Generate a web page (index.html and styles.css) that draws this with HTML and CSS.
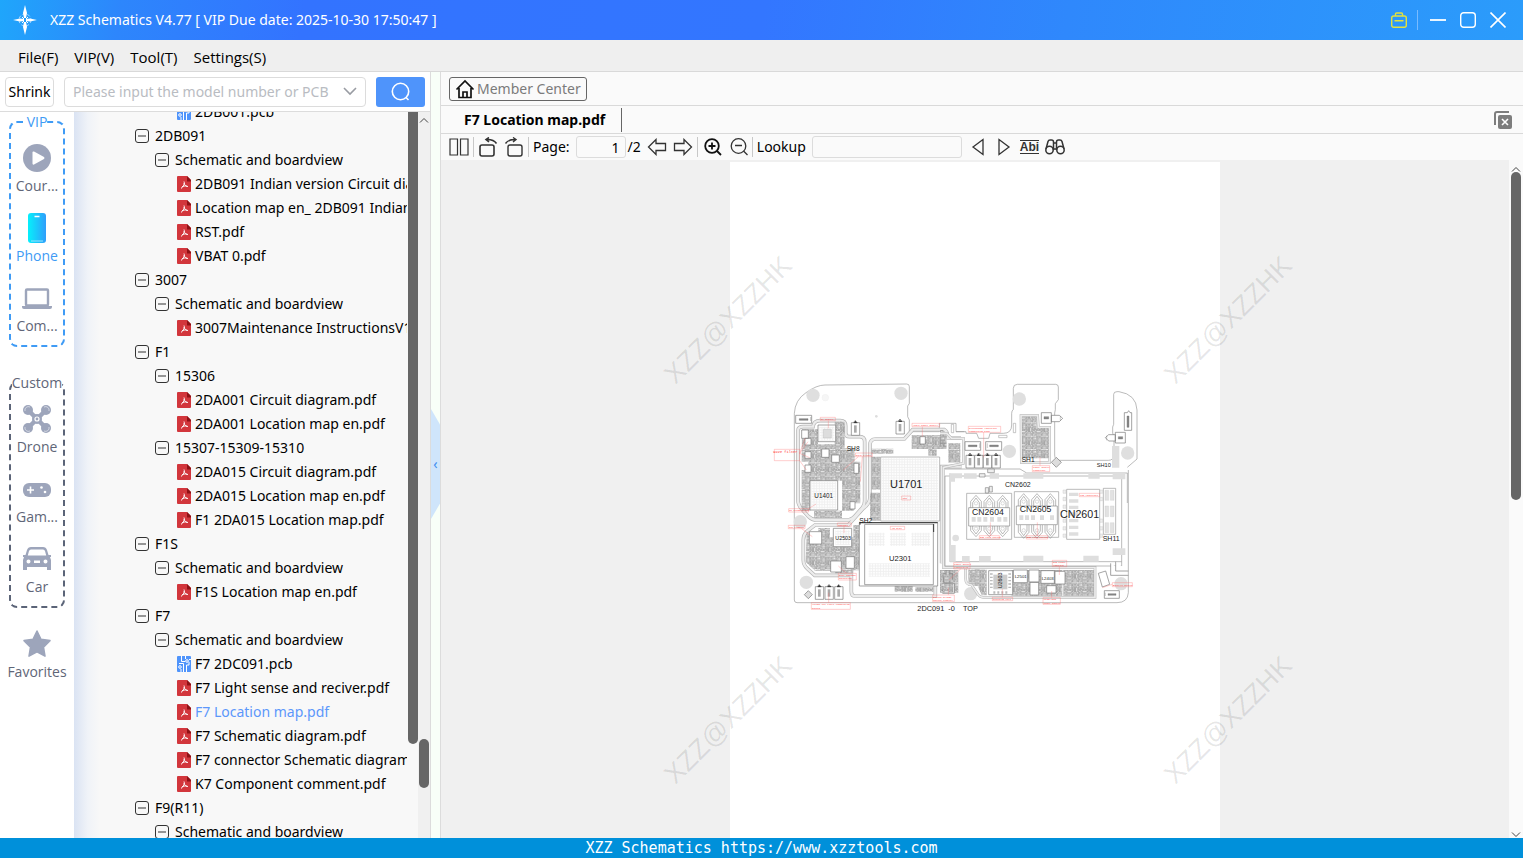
FILE: index.html
```html
<!DOCTYPE html>
<html lang="en">
<head>
    <meta charset="UTF-8">
    <meta name="viewport" content="width=device-width, initial-scale=1.0">
    <title>XZZ Schematics</title>
    <link rel="stylesheet" href="styles.css">
</head>
<body>
    <!-- shared icons -->
    <svg class="defs" width="0" height="0" aria-hidden="true">
        <symbol id="minus" viewBox="0 0 14 14">
            <rect x="0.5" y="0.5" width="13" height="13" rx="2.5" fill="none" stroke="#333"/>
            <path d="M3 7h8" stroke="#333"/>
        </symbol>
        <symbol id="pdf" viewBox="0 0 14 16">
            <path d="M1 0h9l4 4v11a1 1 0 0 1-1 1H1a1 1 0 0 1-1-1V1a1 1 0 0 1 1-1z" fill="#d2363c"/>
            <path d="M10 0l4 4v1.500h-4z" fill="#8e1216"/>
            <path d="M7 5.500c1 2-.5 5-3 7M7 7c.5 2 2 3.500 4 3.500M5 10.800c1.500-.8 3-1 5-.6" fill="none" stroke="#fff" stroke-width="1"/>
        </symbol>
        <symbol id="pcb" viewBox="0 0 14 16">
            <rect width="14" height="16" rx="1" fill="#4f94fb"/>
            <path d="M4.500 0v5.500H8M8.500 0v3M14 3.500h-2M9.500 16V9H12V6M2 7.500h4.500V16M4 16v-3" fill="none" stroke="#fff"/>
            <circle cx="10" cy="5" r="1.300" fill="#4f94fb" stroke="#fff"/>
            <circle cx="3" cy="11" r="1.300" fill="#4f94fb" stroke="#fff"/>
        </symbol>
    </svg>

    <header class="titlebar">
        <svg class="logo" width="24" height="30" viewBox="0 0 24 30">
            <circle cx="12" cy="15" r="6" fill="none" stroke="#a9d6ff" stroke-dasharray="3 2"/>
            <path d="M12 0l2 8-1 5h-2l-1-5zM12 30l2-8-1-5h-2l-1 5zM0 15l7-1.500 4 .5v2l-4 .5zM24 15l-7-1.500-4 .5v2l4 .5z" fill="#fff"/>
            <path d="M9 12l2 2M15 12l-2 2M9 18l2-2M15 18l-2-2" stroke="#fff"/>
        </svg>
        <h1>XZZ Schematics V4.77 [ VIP Due date: 2025-10-30 17:50:47 ]</h1>
        <div class="window-buttons">
            <button aria-label="Toolbox">
                <svg width="16" height="16" viewBox="0 0 16 16" fill="none" stroke="#e3e23c" stroke-width="1.400"><rect x="0.700" y="4" width="14.600" height="11.300" rx="2"/><path d="M4.500 4V2a1 1 0 0 1 1-1h5a1 1 0 0 1 1 1v2M3.500 8.700h9"/></svg>
            </button>
            <span class="line"></span>
            <button aria-label="Minimize">
                <svg width="16" height="16" viewBox="0 0 16 16"><path d="M0 8h16" stroke="#fff" stroke-width="1.800"/></svg>
            </button>
            <button aria-label="Maximize">
                <svg width="16" height="16" viewBox="0 0 16 16"><rect x="0.700" y="0.700" width="14.600" height="14.600" rx="3" fill="none" stroke="#fff" stroke-width="1.400"/></svg>
            </button>
            <button aria-label="Close">
                <svg width="16" height="16" viewBox="0 0 16 16"><path d="M.5.5l15 15M15.500.5l-15 15" stroke="#fff" stroke-width="1.600"/></svg>
            </button>
        </div>
    </header>

    <nav class="menubar">
        <button>File(F)</button>
        <button>VIP(V)</button>
        <button>Tool(T)</button>
        <button>Settings(S)</button>
    </nav>

    <main class="workspace">
        <section class="left">
            <form class="search">
                <button type="button" class="shrink">Shrink</button>
                <div class="combo">
                    <input type="text" aria-label="Model number" placeholder="Please input the model number or PCB">
                    <button type="button" aria-label="History">
                        <svg width="14" height="9" viewBox="0 0 14 9"><path d="M1 1l6 6 6-6" fill="none" stroke="#999ca3" stroke-width="1.600"/></svg>
                    </button>
                </div>
                <button type="button" class="go" aria-label="Search">
                    <svg width="20" height="20" viewBox="0 0 20 20" fill="none" stroke="#fff" stroke-width="1.600"><circle cx="9.500" cy="9.500" r="8.200"/><path d="M15 15.500l2.500 2.500"/></svg>
                </button>
            </form>

            <div class="browser">
                <aside class="sidebar">
                    <fieldset class="group vip">
                        <legend>VIP</legend>
                        <button class="item">
                            <svg width="30" height="30" viewBox="0 0 30 30"><circle cx="15" cy="15" r="14" fill="#9da5bb"/><path d="M10.500 9.500q0-1.500 1.500-1l10 5.500q1 1 0 2l-10 5.500q-1.500.5-1.500-1z" fill="#fff"/></svg>
                            Cour...
                        </button>
                        <button class="item current">
                            <svg width="30" height="30" viewBox="0 0 30 30">
                                <linearGradient id="phone"><stop offset="0" stop-color="#06f0fb"/><stop offset="1" stop-color="#2f9efb"/></linearGradient>
                                <rect x="6" width="18" height="30" rx="3" fill="url(#phone)"/><path d="M12.500 3.500h5" stroke="#fff" stroke-width="1.500"/><path d="M9 28h12" stroke="#9be4ff"/>
                            </svg>
                            Phone
                        </button>
                        <button class="item">
                            <svg width="30" height="30" viewBox="0 0 30 30"><rect x="4" y="6.500" width="22" height="16" rx="1" fill="none" stroke="#9da5bb" stroke-width="2.400"/><path d="M0 23h30v1q0 2-2 2H2q-2 0-2-2z" fill="#9da5bb"/></svg>
                            Com...
                        </button>
                    </fieldset>

                    <fieldset class="group">
                        <legend>Custom</legend>
                        <button class="item">
                            <svg width="30" height="30" viewBox="0 0 30 30">
                                <path d="M6 6l18 18M24 6L6 24" stroke="#9da5bb" stroke-width="4.500"/>
                                <g fill="#9da5bb"><circle cx="6" cy="6" r="5"/><circle cx="24" cy="6" r="5"/><circle cx="6" cy="24" r="5"/><circle cx="24" cy="24" r="5"/><circle cx="15" cy="15" r="5"/></g>
                                <g fill="none" stroke="#dde1ea" stroke-width="0.800"><path d="M3 7a3.500 3.500 0 0 1 5-4M22 3a3.500 3.500 0 0 1 5 4M3 23a3.500 3.500 0 0 0 5 4M22 27a3.500 3.500 0 0 0 5-4"/></g>
                                <circle cx="15" cy="15" r="2" fill="none" stroke="#fff" stroke-width="1.200"/>
                            </svg>
                            Drone
                        </button>
                        <button class="item">
                            <svg width="30" height="30" viewBox="0 0 30 30"><rect x="1" y="9" width="28" height="14" rx="6" fill="#9da5bb"/><path d="M5 16h7M8.500 12.500v7" stroke="#fff" stroke-width="1.600"/><circle cx="19.500" cy="13.500" r="1.300" fill="#fff"/><circle cx="23" cy="18" r="1.300" fill="#fff"/></svg>
                            Gam...
                        </button>
                        <button class="item">
                            <svg width="30" height="30" viewBox="0 0 30 30"><path fill-rule="evenodd" fill="#9da5bb" d="M9 3h12q3 0 4 3l1.500 5H29v2h-1l1 3v10h-4v-3H5v3H1V16l1-3H1v-2h2.500L5 6q1-3 4-3zM9 5.500q-1.500 0-2 1.500l-1.200 4.500h18.400L23 7q-.5-1.500-2-1.500zM6.500 15.500a2 2 0 1 0 0 4 2 2 0 0 0 0-4zM23.500 15.500a2 2 0 1 0 0 4 2 2 0 0 0 0-4zM12 16.500v2.500h6v-2.500z"/></svg>
                            Car
                        </button>
                    </fieldset>

                    <button class="item favorites">
                        <svg width="30" height="30" viewBox="0 0 30 30"><path d="M15 2l4 8.300 9 1.300-6.500 6.500 1.500 9.100-8-4.300-8 4.300 1.500-9.100L2 11.600l9-1.300z" fill="#9da5bb" stroke="#9da5bb" stroke-width="1.500" stroke-linejoin="round"/></svg>
                        Favorites
                    </button>
                </aside>

                <div class="tree">
                    <ul>
                        <li>
                            <ul>
                                <li>
                                    <ul>
                                        <li><a href="#"><svg><use href="#pcb"/></svg>2DB001.pcb</a></li>
                                    </ul>
                                </li>
                            </ul>
                        </li>
                        <li>
                            <button><svg><use href="#minus"/></svg>2DB091</button>
                            <ul>
                                <li>
                                    <button><svg><use href="#minus"/></svg>Schematic and boardview</button>
                                    <ul>
                                        <li><a href="#"><svg><use href="#pdf"/></svg>2DB091 Indian version Circuit diagram.pdf</a></li>
                                        <li><a href="#"><svg><use href="#pdf"/></svg>Location map en_ 2DB091 Indian version.pdf</a></li>
                                        <li><a href="#"><svg><use href="#pdf"/></svg>RST.pdf</a></li>
                                        <li><a href="#"><svg><use href="#pdf"/></svg>VBAT 0.pdf</a></li>
                                    </ul>
                                </li>
                            </ul>
                        </li>
                        <li>
                            <button><svg><use href="#minus"/></svg>3007</button>
                            <ul>
                                <li>
                                    <button><svg><use href="#minus"/></svg>Schematic and boardview</button>
                                    <ul>
                                        <li><a href="#"><svg><use href="#pdf"/></svg>3007Maintenance InstructionsV1.pdf</a></li>
                                    </ul>
                                </li>
                            </ul>
                        </li>
                        <li>
                            <button><svg><use href="#minus"/></svg>F1</button>
                            <ul>
                                <li>
                                    <button><svg><use href="#minus"/></svg>15306</button>
                                    <ul>
                                        <li><a href="#"><svg><use href="#pdf"/></svg>2DA001 Circuit diagram.pdf</a></li>
                                        <li><a href="#"><svg><use href="#pdf"/></svg>2DA001 Location map en.pdf</a></li>
                                    </ul>
                                </li>
                                <li>
                                    <button><svg><use href="#minus"/></svg>15307-15309-15310</button>
                                    <ul>
                                        <li><a href="#"><svg><use href="#pdf"/></svg>2DA015 Circuit diagram.pdf</a></li>
                                        <li><a href="#"><svg><use href="#pdf"/></svg>2DA015 Location map en.pdf</a></li>
                                        <li><a href="#"><svg><use href="#pdf"/></svg>F1 2DA015 Location map.pdf</a></li>
                                    </ul>
                                </li>
                            </ul>
                        </li>
                        <li>
                            <button><svg><use href="#minus"/></svg>F1S</button>
                            <ul>
                                <li>
                                    <button><svg><use href="#minus"/></svg>Schematic and boardview</button>
                                    <ul>
                                        <li><a href="#"><svg><use href="#pdf"/></svg>F1S Location map en.pdf</a></li>
                                    </ul>
                                </li>
                            </ul>
                        </li>
                        <li>
                            <button><svg><use href="#minus"/></svg>F7</button>
                            <ul>
                                <li>
                                    <button><svg><use href="#minus"/></svg>Schematic and boardview</button>
                                    <ul>
                                        <li><a href="#"><svg><use href="#pcb"/></svg>F7 2DC091.pcb</a></li>
                                        <li><a href="#"><svg><use href="#pdf"/></svg>F7 Light sense and reciver.pdf</a></li>
                                        <li><a href="#" class="selected"><svg><use href="#pdf"/></svg>F7 Location map.pdf</a></li>
                                        <li><a href="#"><svg><use href="#pdf"/></svg>F7 Schematic diagram.pdf</a></li>
                                        <li><a href="#"><svg><use href="#pdf"/></svg>F7 connector Schematic diagram.pdf</a></li>
                                        <li><a href="#"><svg><use href="#pdf"/></svg>K7 Component comment.pdf</a></li>
                                    </ul>
                                </li>
                            </ul>
                        </li>
                        <li>
                            <button><svg><use href="#minus"/></svg>F9(R11)</button>
                            <ul>
                                <li><button><svg><use href="#minus"/></svg>Schematic and boardview</button></li>
                            </ul>
                        </li>
                    </ul>
                </div>
                <div class="scroll inner"><span class="thumb"></span></div>
                <div class="scroll outer">
                    <svg width="10" height="6" viewBox="0 0 10 6"><path d="M1 5.500l4-4 4 4" fill="none" stroke="#444"/></svg>
                    <span class="thumb"></span>
                </div>
            </div>
        </section>

        <div class="splitter"><button class="handle" aria-label="Collapse">‹</button></div>

        <section class="right">
            <div class="topline">
                <button class="member">
                    <svg width="20" height="20" viewBox="0 0 20 20" fill="none" stroke="#111" stroke-width="1.700"><path d="M1.500 10.500L10 2l8.500 8.500M4 9v9.500h12V9M8 18.500v-5.500h4v5.500"/></svg>
                    Member Center
                </button>
            </div>

            <div class="tabs">
                <button class="tab">F7 Location map.pdf</button>
                <button class="close-all" aria-label="Close all">
                    <svg width="18" height="18" viewBox="0 0 18 18"><path d="M1 14V3q0-2 2-2h12" fill="none" stroke="#7d7d7d" stroke-width="2"/><rect x="4" y="4" width="14" height="14" rx="2" fill="#7d7d7d"/><path d="M8 8l6 6M14 8l-6 6" stroke="#fff" stroke-width="1.600"/></svg>
                </button>
            </div>

            <div class="toolbar">
                <button aria-label="Two pages"><svg width="20" height="18" viewBox="0 0 20 18"><path d="M1 1h7.500v16H1zM11.500 1H19v16h-7.500z" fill="none" stroke="#333" stroke-width="1.200"/></svg></button>
                <span class="line"></span>
                <button aria-label="Rotate left"><svg width="20" height="20" viewBox="0 0 20 20" fill="none" stroke="#333" stroke-width="1.600"><rect x="2" y="8" width="14" height="11" rx="2"/><path d="M18.500 6.500q-3-4.500-10.500-4M11 .5L8 2.500l3 2.500"/></svg></button>
                <button aria-label="Rotate right"><svg width="20" height="20" viewBox="0 0 20 20" fill="none" stroke="#333" stroke-width="1.400"><rect x="4" y="8" width="14" height="11" rx="2"/><path d="M1.500 6.500q3-4.500 10.500-4M9 .5l3 2-3 2.500"/></svg></button>
                <span class="line"></span>
                <label for="page">Page:</label>
                <div class="page-count">
                    <input id="page" type="text" value="1">
                    <span>/2</span>
                </div>
                <button aria-label="Previous page"><svg width="20" height="18" viewBox="0 0 20 18"><path d="M1.500 9L9 1.500V5.500h9.500v7H9v4z" fill="none" stroke="#333" stroke-width="1.300"/></svg></button>
                <button aria-label="Next page"><svg width="20" height="18" viewBox="0 0 20 18"><path d="M18.500 9L11 1.500V5.500H1.500v7H11v4z" fill="none" stroke="#333" stroke-width="1.300"/></svg></button>
                <span class="line"></span>
                <button aria-label="Zoom in"><svg width="20" height="18" viewBox="-2 0 20 18" fill="none" stroke="#111" stroke-width="1.800"><circle cx="8" cy="8" r="6.800"/><path d="M13 13l4 4M4.500 8h7M8 4.500v7"/></svg></button>
                <button aria-label="Zoom out"><svg width="20" height="18" viewBox="-2 0 20 18" fill="none" stroke="#333" stroke-width="1.300"><circle cx="8.500" cy="8" r="7.300"/><path d="M13.500 13l4 4M5 7.500h7"/></svg></button>
                <span class="line"></span>
                <label for="lookup">Lookup</label>
                <input id="lookup" type="text">
                <button aria-label="Find previous"><svg width="20" height="18" viewBox="-4 0 20 18"><path d="M11 1.500v15L1 9z" fill="none" stroke="#333" stroke-width="1.300"/></svg></button>
                <button aria-label="Find next"><svg width="20" height="18" viewBox="-4 0 20 18"><path d="M1 1.500v15L11 9z" fill="none" stroke="#333" stroke-width="1.300"/></svg></button>
                <button class="abi">Abi</button>
                <button aria-label="Find"><svg width="20" height="16" viewBox="0 0 20 16" fill="none" stroke="#333" stroke-width="1.500"><circle cx="4.500" cy="11" r="3.700"/><circle cx="15.500" cy="11" r="3.700"/><path d="M1 10L3 2.500Q3.500 1 5 1h1.500Q8.500 1 8.500 3v8M19 10l-2-7.500Q16.500 1 15 1h-1.500q-2 0-2 2v8M8.500 4h3M8.500 10h3"/></svg></button>
            </div>

            <div class="viewer">
                <div class="canvas">
                    <div class="sheet">
                        <svg class="board" viewBox="0 0 1470 750">
                            <defs>
                                <pattern id="parts" width="46" height="40" patternUnits="userSpaceOnUse">
                                    <path d="M1 1h16v8H1zM1 12h16v7H1zM20 1h7v18h-7zM30 1h14v8H30zM30 12h6v14h-6zM39 12h5v14h-5zM1 22h8v15H1zM12 22h15v6H12zM12 31h15v7H12zM30 29h14v8H30z" fill="#f6f6f6" stroke="#6a6a6a" stroke-width="1.700"/>
                                    <path d="M4 3h3v4H4zM12 3h3v4h-3zM4 14h9v3H4zM22 4h3v4h-3zM22 12h3v4h-3zM33 3h8v4h-8zM32 15h3v8h-3zM3 25h4v8H3zM15 33h8v3h-8zM33 31h3v4h-3zM39 31h3v4h-3z" fill="#aaa"/>
                                </pattern>
                                <pattern id="balls" width="8" height="8" patternUnits="userSpaceOnUse">
                                    <circle cx="4" cy="4" r="2" fill="none" stroke="#c4c4c4" stroke-width="1"/>
                                </pattern>
                                <g id="cell">
                                    <path d="M0 8h6l6-7 6 7h7v38H0z" fill="#fff" stroke="#777" stroke-width="2"/>
                                    <path d="M7 8h11M12 3v5" stroke="#222" stroke-width="3"/>
                                    <path d="M8 16h8v22H8z" fill="#aaa"/>
                                </g>
                                <g id="lens">
                                    <path d="M-16 40V18L0 0l16 18v22M-10 40V22L0 8l10 14v18" fill="none" stroke="#999" stroke-width="2"/>
                                    <circle cy="24" r="5" fill="none" stroke="#999"/>
                                </g>
                            </defs>

                            <!-- left half -->
                            <g transform="translate(120 0)">
                                <path d="M73 690V130Q75 90 108 68 140 45 165 45l245-3q8 0 8 8v50l-5 8v32l5 10v35h90V160h50v25h25" fill="none" stroke="#999" stroke-width="2"/>
                                <path d="M73 690q0 8 8 8h960q32 0 34-30V300" fill="none" stroke="#999" stroke-width="2"/>
                                <g fill="#dfdfdf"><circle cx="129" cy="76" r="20"/><circle cx="393" cy="70" r="20"/><circle cx="91" cy="455" r="20"/><circle cx="109" cy="637" r="20"/><circle cx="602" cy="671" r="20"/></g>
                                <circle cx="166" cy="83" r="10" fill="#f6f6f6" stroke="#eee"/>
                                <circle cx="319" cy="139" r="4" fill="#ddd"/>
                                <!-- shield frames -->
                                <g fill="none" stroke="#b4b4b4" stroke-width="11">
                                    <path d="M84 180v210q0 15 12 28l20 22q10 10 24 10h90q15 0 25-12l22-25q7-8 7-20V215q0-15-15-15h-30q-12 0-12-12v-20q0-16-16-16h-60q-20 0-22 18H100q-16 0-16 12z"/>
                                    <path d="M100 510v60q0 15 12 26l22 20h110V665q0 13 12 13h240V460M100 510q0-15 10-25l25-20h100L280 415q20-15 20-35V225q0-18 18-18h85l25-28h95q10 5 10 25h40M515 580V290h60"/>
                                </g>
                                <g fill="none" stroke="#ececec" stroke-width="7">
                                    <path d="M84 180v210q0 15 12 28l20 22q10 10 24 10h90q15 0 25-12l22-25q7-8 7-20V215q0-15-15-15h-30q-12 0-12-12v-20q0-16-16-16h-60q-20 0-22 18H100q-16 0-16 12z"/>
                                    <path d="M100 510v60q0 15 12 26l22 20h110V665q0 13 12 13h240V460M100 510q0-15 10-25l25-20h100L280 415q20-15 20-35V225q0-18 18-18h85l25-28h95q10 5 10 25h40M515 580V290h60"/>
                                </g>
                                <path d="M96 178h48v45h50v-68h30v80h30v40h17v125h-20v22h-35v22h-84v-22h84v-90h-95v90h-26V300h20v-25h-20zM305 236h65v15h-65zM305 260h26v100h-26zM300 368h30v84h-30zM425 195h105v42h-30v20h-25v-20h-50zM250 465h18v136h-18zM374 648h54v17h-54zM436 652h54v13h-54zM520 600h45v68h-45zM110 486h35v-12h35v28h70v108h-55v-8h-60l-28-26z" fill="url(#parts)"/>
                                <g fill="#fff" stroke="#777" stroke-width="2">
                                    <path d="M95 180h20v25H95zM105 205h18v20h-18zM105 245h18v20h-18zM185 255h23v22h-23zM155 237h22v25h-22zM105 285h18v22h-18zM228 560h25v35h-25zM240 395h15v22h-15zM252 280h14v30h-14z"/>
                                    <path d="M144 165h53v50h-53zM190 475h55v55h-55zM118 485h37v37h-37zM182 573h32v33h-32zM120 332h83v88h-83z"/>
                                    <path d="M450 200h16v22h-16zM520 612h28v24h-28zM518 640h35v30h-35z"/>
                                </g>
                                <path d="M124 336h75v80h-75zM148 170h45v42h-45zM196 481h44v44h-44z" fill="url(#balls)"/>
                                <path d="M160 178h24v26h-24z" fill="#ddd" stroke="#aaa"/>
                                <path d="M332 261h177v192H332z" fill="#fff" stroke="#999" stroke-width="2"/>
                                <path d="M336 265h168v184H336z" fill="url(#balls)"/>
                                <path d="M268 458h235v190H268z" fill="#fff" stroke="#777" stroke-width="2"/>
                                <path d="M284 463h206v181H284z" fill="none" stroke="#777" stroke-width="2"/>
                                <path d="M268 458h235M491 462v24M270 458v6" stroke="#333" stroke-width="3"/>
                                <path d="M296 488h48v40h-48zM360 488h48v40h-48zM424 488h56v40h-56zM296 580h184v40H296z" fill="url(#balls)"/>
                                <g fill="#fff" stroke="#777" stroke-width="2"><path d="M77 136h48v24H77z"/><path d="M103 674l12-12 12 12-12 12z" fill="#ddd"/></g>
                                <path d="M88 146h26v5H88zM122 141v12" fill="#888" stroke="#555"/>
                                <use href="#cell" x="244" y="150"/><use href="#cell" x="378" y="146"/>
                                <use href="#cell" x="136" y="642"/><use href="#cell" x="165" y="642"/><use href="#cell" x="194" y="642"/>
                                <g class="part-names">
                                    <text x="230" y="243" font-size="20">SH8</text>
                                    <text x="133" y="383" font-size="19">U1401</text>
                                    <text x="360" y="355" font-size="33">U1701</text>
                                    <text x="268" y="458" font-size="20">SH2</text>
                                    <text x="196" y="510" font-size="16">U2503</text>
                                    <text x="357" y="572" font-size="23">U2301</text>
                                    <text x="442" y="723" font-size="22">2DC091</text>
                                    <text x="535" y="723" font-size="22">-0</text>
                                    <text x="579" y="723" font-size="22">TOP</text>
                                </g>
                            </g>

                            <!-- right half -->
                            <g transform="translate(630 0)">
                                <path d="M48 185h30v5h32l6 15h30l4-15h40q25 0 25-25v-35q0-8 5-12V55q0-12 12-12h115q8 0 8 8v38l-9 12v18l-2 10V255q0 16 16 16h145q15 0 17-15v-55l-4-12v-18l3-8V73q0-8 10-8h6q52 8 54 55v147L562 292" fill="none" stroke="#999" stroke-width="2"/>
                                <g fill="#dfdfdf"><circle cx="238" cy="87" r="20"/><circle cx="208" cy="244" r="20"/><circle cx="563" cy="249" r="20"/><circle cx="543" cy="641" r="20"/><circle cx="47" cy="504" r="10"/></g>
                                <path d="M34 163h7v25h-7zM176 196h25v7h-25zM220 160h7v28h-7z" fill="none" stroke="#aaa" stroke-width="2"/>
                                <path d="M243 137h50l2 35h34v105h-85z" fill="none" stroke="#b4b4b4" stroke-width="8"/>
                                <path d="M243 137h50l2 35h34v105h-85z" fill="none" stroke="#ececec" stroke-width="5"/>
                                <path d="M246 140h44v35h36v90h-80zM25 220h36v58H25zM0 180h10l8 50H0zM0 600h40v68H0zM85 598h55v78h-15l-12-28H85zM215 600h152v78H215zM370 600h92v78h-92z" fill="url(#parts)"/>
                                <path d="M0 190h20l15 15h35v75l-60 12v300h455v90H130q-12 0-20-15l-15-22q-18 0-18-18v-30" fill="none" stroke="#b4b4b4" stroke-width="8"/>
                                <path d="M0 190h20l15 15h35v75l-60 12v300h455v90H130q-12 0-20-15l-15-22q-18 0-18-18v-30" fill="none" stroke="#ececec" stroke-width="5"/>
                                <path d="M15 297h225l20 12h302v90M15 318v270h530V318H15M30 310v265h515" fill="none" stroke="#999" stroke-width="2"/>
                                <g fill="#fff" stroke="#777" stroke-width="2">
                                    <path d="M75 215h47v26H75zM137 215h48v26h-48z"/><path d="M304 128h30v32h-30zM334 136h24l10 9-10 10h-24zM526 187h30v32h-30zM526 194h-20l-10 9 10 10h20z"/>
                                    <path d="M553 128h9l4-6 4 6h5v53h-22z"/><path d="M334 277l15-15 15 15-15 15z" fill="#ddd"/>
                                    <path d="M475 610l22-7 12 40-22 8zM493 662h45v23h-45zM512 580v36h53M527 575v28h38" />
                                    <path d="M80 370h135v138H80zM223 365h133v137H223zM380 358h99v150h-99zM490 355h37v138h-37z" stroke="#999"/>
                                    <path d="M146 602h72v72h-72zM220 600h42v38h-42zM267 600h30v36h-30zM303 602h40v38h-40zM345 604h30v38h-30zM270 637h26v38h-26zM320 647h28v22h-28z"/>
                                </g>
                                <path d="M160 614h42v44h-42z" fill="#ccc"/>
                                <path d="M150 610h8v4h-8zM150 620h8v4h-8zM150 630h8v4h-8zM150 640h8v4h-8zM150 650h8v4h-8zM205 610h8v4h-8zM205 620h8v4h-8zM205 630h8v4h-8zM205 640h8v4h-8zM205 650h8v4h-8zM160 664h6v7h-6zM172 664h6v7h-6zM184 664h6v7h-6zM196 664h6v7h-6z" fill="#bbb"/>
                                <g fill="#dedede"><path d="M28 310h38v15H45v10H28zM72 310h38v16H72zM149 310h28v16h-28zM250 310h60v16h-60zM445 310h34v16h-34zM518 310h38v18h-38zM27 525h20v50H27zM66 558h23v17H66zM117 558h35v17h-35zM250 557h60v18h-60zM430 557h46v18h-46zM518 535h38v20h-38zM516 228h22v65h-22z"/><path d="M387 368h28v10h-28zM387 388h28v10h-28zM387 407h28v10h-28zM387 427h28v10h-28zM387 447h28v10h-28zM387 467h28v10h-28zM387 487h28v10h-28z"/></g>
                                <path d="M495 361h11v30h-11zM511 361h11v30h-11zM495 408h11v32h-11zM511 408h11v32h-11zM495 458h11v30h-11zM511 458h11v30h-11z" fill="#e2e2e2" stroke="#ccc"/>
                                <g id="rows"><use href="#lens" x="108" y="376"/><use href="#lens" x="148" y="376"/><use href="#lens" x="188" y="376"/><use href="#lens" x="251" y="371"/><use href="#lens" x="291" y="371"/><use href="#lens" x="331" y="371"/></g>
                                <use href="#rows" transform="matrix(1 0 0 -1 0 876)"/>
                                <path d="M86 413h123v55H86zM229 408h123v56H229z" fill="#fff" stroke="#888" stroke-width="2"/>
                                <path d="M95 441h12v14H95zM112 441h12v14h-12zM130 441h12v14h-12zM150 441h12v14h-12zM172 441h12v14h-12zM190 441h12v14h-12zM238 436h12v14h-12zM255 436h12v14h-12zM273 436h12v14h-12zM300 436h12v14h-12zM330 436h12v14h-12z" fill="#ddd"/>
                                <path d="M369 360h9v10h-9zM369 382h9v10h-9zM369 405h9v10h-9zM369 447h9v10h-9zM369 470h9v10h-9zM369 492h9v10h-9zM480 360h8v10h-8zM480 382h8v10h-8zM480 447h8v10h-8zM480 470h8v10h-8zM480 492h8v10h-8z" fill="#eee" stroke="#bbb"/>
                                <path d="M136 353h10v16h-10zM148 349h9v17h-9zM118 311h17v10h-17zM143 297h20v11h-20z" fill="#eee" stroke="#888" stroke-width="2"/>
                                <path d="M85 225h26v5H85zM149 225h26v5h-26zM119 220v14M142 220v14M312 140h14v7h-14zM535 200h13v7h-13zM504 671h24v5h-24zM561 138h6v34h-6zM361 138v14M500 197v14M496 668v10" fill="#888" stroke="#666"/>
                                <use href="#cell" x="78" y="248"/><use href="#cell" x="104" y="248"/><use href="#cell" x="130" y="248"/><use href="#cell" x="156" y="248"/>
                                <g class="part-names">
                                    <text x="245" y="277" font-size="20">SH1</text>
                                    <text x="470" y="290" font-size="17">SH10</text>
                                    <text x="195" y="351" font-size="21">CN2602</text>
                                    <text x="96" y="434" font-size="26">CN2604</text>
                                    <text x="239" y="425" font-size="26">CN2605</text>
                                    <text x="360" y="444" font-size="32">CN2601</text>
                                    <text x="488" y="513" font-size="21">SH11</text>
                                    <text x="224" y="624" font-size="13">L2501</text>
                                    <text x="305" y="630" font-size="13">L2403</text>
                                    <text x="-655" y="187" font-size="16" transform="rotate(-90)">U2603</text>
                                </g>
                            </g>

                            <!-- red notes -->
                            <g class="notes" transform="translate(120 0)">
                                <path d="M13 238h76v34H13zM151 142h45v10h-45zM426 160h83v10h-83zM256 249h51v11h-51zM395 378h27v12h-27zM56 416h60v10H56zM55 466h50v10H55zM202 459h42v10h-42zM361 469h43v10h-43zM205 610h54v20h-54zM124 698h117v20H124zM488 675h65v20h-65z"/>
                                <path d="M595 169h97v18h-97zM787 287h52v18h-52zM928 370h61v10h-61zM628 497h60v10h-60zM769 497h64v10h-64zM551 578h49v19h-49zM847 571h43v19h-43zM667 682h61v10h-61zM819 683h52v20h-52zM1027 638h60v12h-60z"/>
                                <path d="M89 250l16-45M89 250l25-35M89 250l30 13M89 272l20 28M175 152v23M265 260l-45 40M277 260l-6 75M457 170v30M116 416l22-14M95 476l32 24M222 469v20M230 610l-25-22M176 698v-30M535 675v-22M641 187v75M810 287v-25M661 497v-40M802 497v-40M572 597l-35 33M868 590v25M697 682v-25M845 683v-20M1027 643l-30 10"/>
                                <g>
                                    <text x="10" y="250" class="large">wave filter</text><text x="153" y="150">RF module</text><text x="428" y="168">Audio power supply</text><text x="258" y="258">Main filter</text><text x="398" y="387">CPU</text><text x="58" y="424">RF transceiver</text><text x="57" y="474">The control</text><text x="204" y="467">antenna</text><text x="366" y="477">HD disk</text><text x="207" y="618">Deal antenna</text><text x="207" y="628">switching</text><text x="126" y="706">Volume key cable connection</text><text x="126" y="716">socket</text><text x="490" y="683">Switch bridge</text><text x="490" y="693">switch control</text>
                                    <text x="597" y="177">Microphone interface</text><text x="597" y="186">connection base</text><text x="789" y="295">Power supply</text><text x="789" y="304">connector</text><text x="930" y="378">LCD interface</text><text x="630" y="505">SIM card socket</text><text x="771" y="505">SIM card socket</text><text x="553" y="586">Power supply</text><text x="553" y="595">connection</text><text x="849" y="579">Red power</text><text x="849" y="588">inductor</text><text x="669" y="690">Charging chip</text><text x="821" y="691">Headlight</text><text x="821" y="701">power supply</text><text x="1029" y="647">Backlit socket</text>
                                </g>
                            </g>
                        </svg>
                    </div>
                    <span class="watermark top west">XZZ@XZZHK</span>
                    <span class="watermark top east">XZZ@XZZHK</span>
                    <span class="watermark bottom west">XZZ@XZZHK</span>
                    <span class="watermark bottom east">XZZ@XZZHK</span>
                </div>
                <div class="scroll view">
                    <svg width="10" height="6" viewBox="0 0 10 6"><path d="M1 5.500l4-4 4 4" fill="none" stroke="#444"/></svg>
                    <span class="thumb"></span>
                    <svg class="down" width="10" height="6" viewBox="0 0 10 6"><path d="M1 .5l4 4 4-4" fill="none" stroke="#444"/></svg>
                </div>
            </div>
        </section>
    </main>

    <footer class="statusbar">XZZ Schematics https://www.xzztools.com</footer>
</body>
</html>
```
FILE: styles.css
```css
* {
    box-sizing: border-box;
}

body {
    margin: 0;
    height: 100vh;
    display: flex;
    flex-direction: column;
    overflow: hidden;
    font-family: "Noto Sans", "Open Sans", sans-serif;
    font-size: 14px;
    line-height: 20px;
    color: #000;
    background: #fff;
}

button,
input {
    font: inherit;
    color: inherit;
    border: none;
    background: none;
    padding: 0;
    margin: 0;
}

button {
    cursor: pointer;
    white-space: nowrap;
}

.defs {
    position: absolute;
}

/* title bar */
.titlebar {
    flex: none;
    height: 40px;
    display: flex;
    align-items: center;
    padding: 0 17px 0 13px;
    color: #fff;
    background: linear-gradient(100deg, #1fa6fb 0, #2d86fc 8%, #3373ff 20%, #3376ff 50%, #2f88fc 70%, #2b9cfb 100%);
}

.titlebar h1 {
    flex: 1;
    margin: 0 0 0 13px;
    font-size: 14px;
    font-weight: normal;
}

.window-buttons {
    display: flex;
    align-items: center;
    gap: 14px;
}

.window-buttons button,
.toolbar button,
.combo button {
    display: flex;
    align-items: center;
    justify-content: center;
}

.window-buttons .line {
    width: 1px;
    height: 20px;
    margin: 0 -2px 0 -4px;
    background: #79bbff;
}

.menubar {
    flex: none;
    height: 32px;
    display: flex;
    gap: 16px;
    padding: 2px 18px 0;
    font-family: "Open Sans", "Noto Sans", sans-serif;
    font-size: 15px;
    background: #efefef;
    border-bottom: 1px solid #d9d9d9;
}

.workspace {
    flex: 1;
    min-height: 0;
    display: flex;
}

/* left side */
.left {
    flex: none;
    width: 431px;
    display: flex;
    flex-direction: column;
    border-right: 1px solid #dcdcdc;
}

.search {
    flex: none;
    height: 40px;
    display: flex;
    align-items: center;
    padding: 0 5px;
    border-bottom: 1px solid #dcdcdc;
}

.search button.shrink {
    width: 49px;
    height: 30px;
    border: 1px solid #dcdcdc;
    border-radius: 4px;
}

.combo {
    flex: 1;
    height: 30px;
    display: flex;
    align-items: center;
    margin: 0 10px;
    padding: 0 8px;
    border: 1px solid #dcdcdc;
    border-radius: 4px;
}

.combo input {
    flex: 1;
    min-width: 0;
}

.combo input::placeholder {
    color: #b9bcc2;
    opacity: 1;
}

.search button.go {
    width: 49px;
    height: 30px;
    display: flex;
    align-items: center;
    justify-content: center;
    background: #4f94fb;
    border-radius: 3px;
}

.browser {
    flex: 1;
    min-height: 0;
    display: flex;
}

.sidebar {
    flex: none;
    width: 74px;
    padding: 0 0 0 9px;
    font-family: "Open Sans", "Noto Sans", sans-serif;
    color: #5f6678;
}

.group {
    width: 56px;
    min-width: 0;
    margin: 0 0 26px;
    padding: 11px 0 9px;
    display: flex;
    flex-direction: column;
    align-items: center;
    border: 2px dashed #5b6478;
    border-radius: 8px;
}

.group.vip {
    border-color: #3f9bf5;
}

.group legend {
    margin: 0 auto;
    padding: 0;
    line-height: 20px;
}

.vip legend,
.item.current {
    color: #3f9bf5;
}

.item {
    width: 60px;
    margin: 0 -4px 17px;
    display: flex;
    flex-direction: column;
    align-items: center;
    gap: 3px;
}

.group .item:last-child {
    margin-bottom: 0;
}

.item.favorites {
    margin: -5px 0 0 -2px;
}

.tree {
    flex: 1;
    min-width: 0;
    overflow: hidden;
    padding-left: 61px;
    background: linear-gradient(90deg, #dae3f3 0, #f0f3f8 14px, #f8f8f8 26px);
}

.tree > ul {
    margin-top: -12px;
}

.tree ul {
    margin-bottom: 0;
    padding: 0;
    list-style: none;
}

.tree ul ul {
    padding-left: 20px;
}

.tree button,
.tree a {
    display: flex;
    align-items: center;
    height: 24px;
    gap: 6px;
    white-space: nowrap;
    color: #000;
    text-decoration: none;
}

.tree a {
    gap: 4px;
    padding-left: 2px;
}

.tree a.selected {
    color: #5c97fb;
}

.tree svg {
    flex: none;
    width: 14px;
    height: 16px;
}

.scroll {
    flex: none;
    display: flex;
    flex-direction: column;
    align-items: center;
}

.thumb {
    width: 10px;
    border-radius: 5px;
    background: #666;
}

.inner {
    width: 11px;
    background: #f8f8f8;
}

.inner .thumb {
    height: 87%;
    border-radius: 0 0 5px 5px;
}

.outer {
    width: 12px;
    padding: 5px 0 50px;
    justify-content: space-between;
    background: #f0f0f0;
}

.outer .thumb {
    height: 49px;
}

.splitter {
    flex: none;
    width: 10px;
    display: flex;
    align-items: center;
    padding-top: 18px;
    background: #f8fff8;
    border-right: 1px solid #dcdcdc;
}

.handle {
    width: 9px;
    height: 110px;
    color: #3f8df0;
    background: #cfe5fb;
    clip-path: polygon(0 0, 100% 14%, 100% 86%, 0 100%);
}

/* document side */
.right {
    flex: 1;
    min-width: 0;
    display: flex;
    flex-direction: column;
    background: #fafafa;
}

.topline {
    flex: none;
    height: 34px;
    display: flex;
    align-items: center;
    padding-left: 8px;
    border-bottom: 1px solid #d9d9d9;
}

.member {
    height: 24px;
    display: flex;
    align-items: center;
    gap: 2px;
    padding: 0 5px;
    color: #7b7b7b;
    border: 1px solid #666;
    border-radius: 3px;
}

.tabs {
    flex: none;
    height: 28px;
    display: flex;
    align-items: center;
    justify-content: space-between;
    padding-right: 11px;
    border-bottom: 1px solid #d9d9d9;
}

.tab {
    height: 24px;
    padding: 0 16px 0 23px;
    font-weight: bold;
    border-right: 1px solid #666;
}

.close-all {
    display: flex;
}

.toolbar {
    flex: none;
    height: 26px;
    display: flex;
    align-items: center;
    gap: 6px;
    padding-left: 8px;
}

.toolbar .line {
    width: 1px;
    height: 20px;
    margin: 0 -2px;
    background: #c8c8c8;
}

.toolbar input {
    width: 150px;
    height: 22px;
    border: 1px solid #dcdcdc;
    border-radius: 3px;
}

.page-count {
    display: flex;
    align-items: center;
    gap: 2px;
}

.page-count input {
    width: 50px;
    padding: 0 5px;
    text-align: right;
}

.toolbar button.abi {
    height: 14px;
    font-family: "Liberation Sans", sans-serif;
    font-size: 12px;
    font-weight: bold;
    line-height: 12px;
    color: #333;
    border-top: 1px solid #333;
    border-bottom: 1px solid #333;
}

.viewer {
    flex: 1;
    min-height: 0;
    display: flex;
}

.canvas {
    position: relative;
    flex: 1;
    display: flex;
    justify-content: center;
    padding-top: 2px;
    overflow: hidden;
    background: #f0f0f0;
}

.sheet {
    width: 490px;
    padding-top: 208px;
    background: #fff;
}

.board {
    display: block;
    width: 100%;
}

.part-names text {
    font-family: "Liberation Sans", sans-serif;
    fill: #222;
}

.notes path {
    fill: none;
    stroke: #ff6b6b;
    stroke-width: 1;
}

.notes text {
    font-family: "Liberation Mono", monospace;
    font-size: 7px;
    fill: #ff3333;
}

.notes text.large {
    font-size: 11px;
}

.watermark {
    position: absolute;
    width: 200px;
    margin: -20px 0 0 -100px;
    font-family: "Liberation Sans", sans-serif;
    font-size: 27px;
    line-height: 40px;
    text-align: center;
    color: rgba(0, 0, 0, 0.1);
    transform: rotate(-45deg);
}

.watermark.top {
    top: 160px;
}

.watermark.bottom {
    top: 560px;
}

.watermark.west {
    left: calc(50% - 247px);
}

.watermark.east {
    left: calc(50% + 253px);
}

.view {
    width: 14px;
    padding: 6px 0 0;
    background: #fafafa;
}

.view .thumb {
    height: 328px;
}

.view .down {
    margin-top: auto;
}

.statusbar {
    flex: none;
    height: 20px;
    font-family: "DejaVu Sans Mono", monospace;
    font-size: 15px;
    line-height: 20px;
    text-align: center;
    color: #fff;
    background: #0090da;
}
```
